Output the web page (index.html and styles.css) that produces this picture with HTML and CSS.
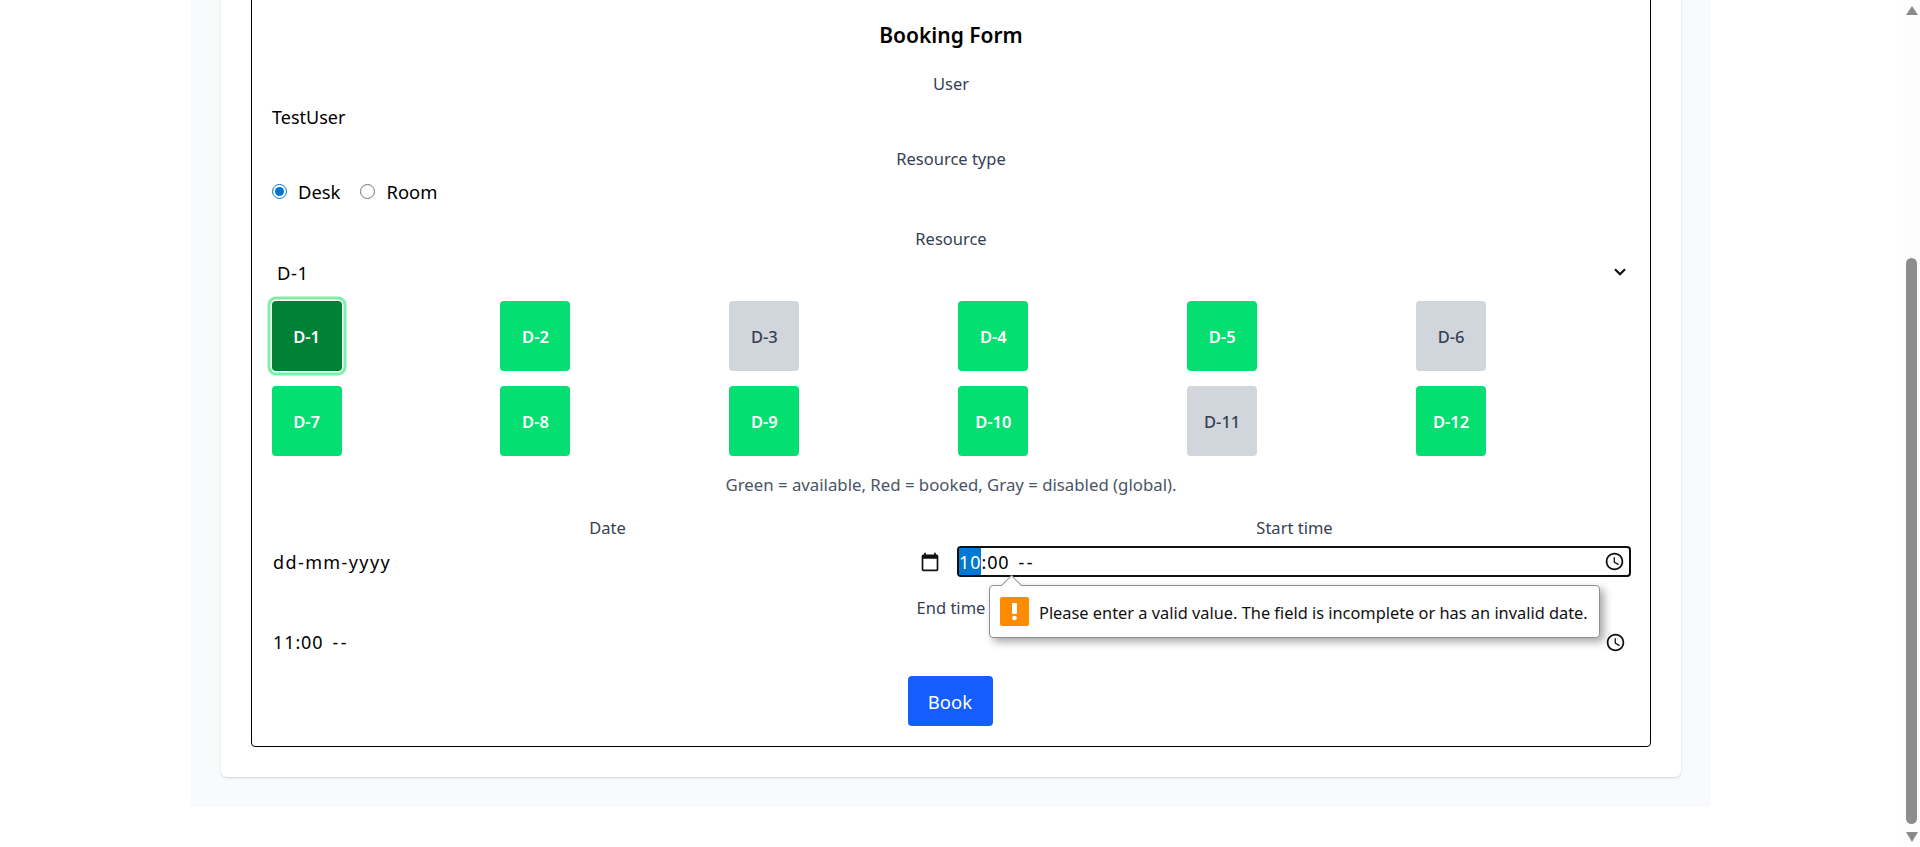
FILE: index.html
```html
<!DOCTYPE html>
<html lang="en">
<head>
<meta charset="utf-8">
<title>Booking Form</title>
<link rel="stylesheet" href="styles.css">
</head>
<body>
<div class="page">
  <main class="container">
    <section class="card">
      <form class="form">
        <h2 class="title">Booking Form</h2>
        <div class="label label-user">User</div>
        <div class="value">TestUser</div>
        <div class="label label-type">Resource type</div>
        <div class="radios">
          <label class="radio"><input type="radio" name="rt" checked><span>Desk</span></label>
          <label class="radio"><input type="radio" name="rt"><span>Room</span></label>
        </div>
        <div class="label label-resource">Resource</div>
        <div class="select"><span>D-1</span>
          <svg class="chevron" width="12" height="8" viewBox="0 0 12 8"><path d="M1 1.2l5 5 5-5" fill="none" stroke="#111" stroke-width="2.2"/></svg>
        </div>
        <div class="grid">
          <button type="button" class="tile selected">D-1</button>
          <button type="button" class="tile">D-2</button>
          <button type="button" class="tile off">D-3</button>
          <button type="button" class="tile">D-4</button>
          <button type="button" class="tile">D-5</button>
          <button type="button" class="tile off">D-6</button>
          <button type="button" class="tile">D-7</button>
          <button type="button" class="tile">D-8</button>
          <button type="button" class="tile">D-9</button>
          <button type="button" class="tile">D-10</button>
          <button type="button" class="tile off">D-11</button>
          <button type="button" class="tile">D-12</button>
        </div>
        <p class="help">Green = available, Red = booked, Gray = disabled (global).</p>
        <div class="dates">
          <div class="col">
            <div class="label">Date</div>
            <div class="field"><span class="date-text">dd-mm-yyyy</span>
              <svg class="icon" width="20" height="20" viewBox="0 0 24 24"><path d="M20 3h-1V1h-2v2H7V1H5v2H4c-1.100 0-2 .9-2 2v16c0 1.100.9 2 2 2h16c1.100 0 2-.9 2-2V5c0-1.100-.9-2-2-2zm0 18H4V8h16v13z"/></svg>
            </div>
          </div>
          <div class="col">
            <div class="label">Start time</div>
            <div class="field focused"><span class="time"><span class="seg">10</span>:00<span class="ampm">--</span></span>
              <svg class="icon" width="21" height="21" viewBox="0 0 24 24"><path d="M11.990 2C6.470 2 2 6.480 2 12s4.470 10 9.990 10C17.520 22 22 17.520 22 12S17.520 2 11.990 2zM12 20c-4.420 0-8-3.580-8-8s3.580-8 8-8 8 3.580 8 8-3.580 8-8 8zm.5-13H11v6l5.250 3.150.75-1.230-4.500-2.670z"/></svg>
            </div>
            <div class="tooltip">
              <span class="arrow"></span>
              <svg class="warn" width="29" height="29" viewBox="0 0 29 29"><rect width="29" height="29" rx="2" fill="#ff8c00"/><rect x="12" y="6" width="5" height="11" rx="1" fill="#fff"/><circle cx="14.500" cy="21" r="2.300" fill="#fff"/></svg>
              <span class="tip-text">Please enter a valid value. The field is incomplete or has an invalid date.</span>
            </div>
          </div>
          <div class="col wide">
            <div class="label">End time</div>
            <div class="field end"><span class="time">11:00<span class="ampm">--</span></span>
              <svg class="icon" width="21" height="21" viewBox="0 0 24 24"><path d="M11.990 2C6.470 2 2 6.480 2 12s4.470 10 9.990 10C17.520 22 22 17.520 22 12S17.520 2 11.990 2zM12 20c-4.420 0-8-3.580-8-8s3.580-8 8-8 8 3.580 8 8-3.580 8-8 8zm.5-13H11v6l5.250 3.150.75-1.230-4.500-2.670z"/></svg>
            </div>
          </div>
        </div>
        <div class="actions"><button type="button" class="book">Book</button></div>
      </form>
    </section>
  </main>
  <div class="scrollbar">
    <span class="sb-up"></span>
    <span class="sb-thumb"></span>
    <span class="sb-down"></span>
  </div>
</div>
</body>
</html>
```

FILE: styles.css
```css
* { box-sizing: border-box; }
html, body { margin: 0; padding: 0; background: #fff; }
body { font-family: "Noto Sans", "Liberation Sans", sans-serif; color: #000; }
.page { position: relative; width: 1920px; height: 847px; overflow: hidden; padding-right: 18px; }
.container { width: 1520px; margin: -71px auto 0; padding: 30px; background: #f9fafb; }
.card { background: #fff; border-radius: 6px; padding: 30px; box-shadow: 0 1px 3px rgba(0,0,0,.1), 0 1px 2px rgba(0,0,0,.06); }
.form { position: relative; border: 1px solid #000; border-radius: 4px; padding: 20px; }
.title { margin: 10px 0 0; height: 30px; line-height: 30px; font-size: 21px; font-weight: 600; text-align: center; }
.label { height: 24px; line-height: 26px; font-size: 16.500px; color: #364153; text-align: center; }
.label-user { margin-top: 21px; }
.label-type { margin-top: 14px; }
.label-resource { margin-top: 20px; }
.value { margin-top: 7px; height: 30px; line-height: 30px; font-size: 18px; }
.radios { display: flex; align-items: center; gap: 20px; height: 30px; margin-top: 6px; font-size: 18.400px; }
.radio { display: flex; align-items: center; gap: 11px; }
.radio input { width: 15px; height: 15px; margin: 0; accent-color: #0075d4; }
.select { display: flex; align-items: center; justify-content: space-between; height: 30px; margin-top: 7px; padding: 0 4px 0 5px; font-size: 18.400px; letter-spacing: .6px; }
.chevron { display: block; }
.grid { display: grid; grid-template-columns: repeat(6, 1fr); gap: 15px; margin: 14px 0 0 -.45px; }
.tile { width: 70px; height: 70px; padding: 0; border: 0; border-radius: 4px; background: #05df72; color: #fff; font: 600 16.500px "Noto Sans", sans-serif; }
.tile.selected { background: #008236; box-shadow: 0 0 0 1.500px #fff, 0 0 0 4.500px #7bf1a8; }
.tile.off { background: #d1d5dc; color: #364153; font-weight: 500; }
.help { margin: 17px 0 0; height: 24px; line-height: 24px; font-size: 16.800px; color: #4a5565; text-align: center; }
.dates { display: grid; grid-template-columns: 1fr 1fr; column-gap: 16px; margin-top: 18px; }
.col { position: relative; }
.wide { grid-column: 1 / 3; margin-top: 18px; }
.field { display: flex; align-items: center; justify-content: space-between; height: 31px; margin-top: 7px; padding: 0 3px 0 1px; font-size: 18px; }
.field.focused { margin-left: -2px; margin-right: -1px; padding-right: 4px; border: 2px solid #101010; border-radius: 4px; padding-left: 0; }
.field.end { height: 30px; margin-top: 8px; padding-right: 4px; }
.date-text { letter-spacing: 1.400px; }
.icon { display: block; fill: #111; }
.time { display: flex; align-items: center; height: 100%; letter-spacing: .9px; }
.seg { display: flex; align-items: center; height: 100%; background: #0078d4; color: #fff; }
.ampm { margin-left: 9px; letter-spacing: 2.500px; }
.tooltip { position: absolute; left: 30px; top: 70px; display: flex; align-items: center; width: 611px; height: 53px; padding: 0 9px 0 10px; background: #fff; border: 1px solid #8f8f8f; border-radius: 4px; box-shadow: 4px 4px 8px rgba(0,0,0,.35); z-index: 2; font-size: 16.360px; color: #111; white-space: nowrap; }
.arrow { position: absolute; left: 14px; top: -8px; width: 15px; height: 15px; background: #fff; border-left: 1px solid #8f8f8f; border-top: 1px solid #8f8f8f; transform: rotate(45deg); }
.warn { flex: none; display: block; margin-right: 10px; }
.tip-text { display: block; padding-top: 3px; }
.actions { display: flex; justify-content: center; margin-top: 19px; padding-right: 2px; }
.book { width: 85px; height: 50px; padding: 0; border: 0; border-radius: 4px; background: #155dfc; color: #fff; font: 400 18.500px "Noto Sans", sans-serif; }
.scrollbar { position: absolute; top: 0; right: 0; display: flex; flex-direction: column; align-items: center; width: 17px; height: 847px; background: #fdfdfd; }
.sb-up { margin-top: 6px; border-left: 6.500px solid transparent; border-right: 6.500px solid transparent; border-bottom: 9px solid #8a8a8a; }
.sb-thumb { width: 11px; height: 566px; margin-top: 243px; border-radius: 6px; background: #8d8d8d; }
.sb-down { margin-top: 8px; border-left: 6.500px solid transparent; border-right: 6.500px solid transparent; border-top: 10px solid #8a8a8a; }
```
